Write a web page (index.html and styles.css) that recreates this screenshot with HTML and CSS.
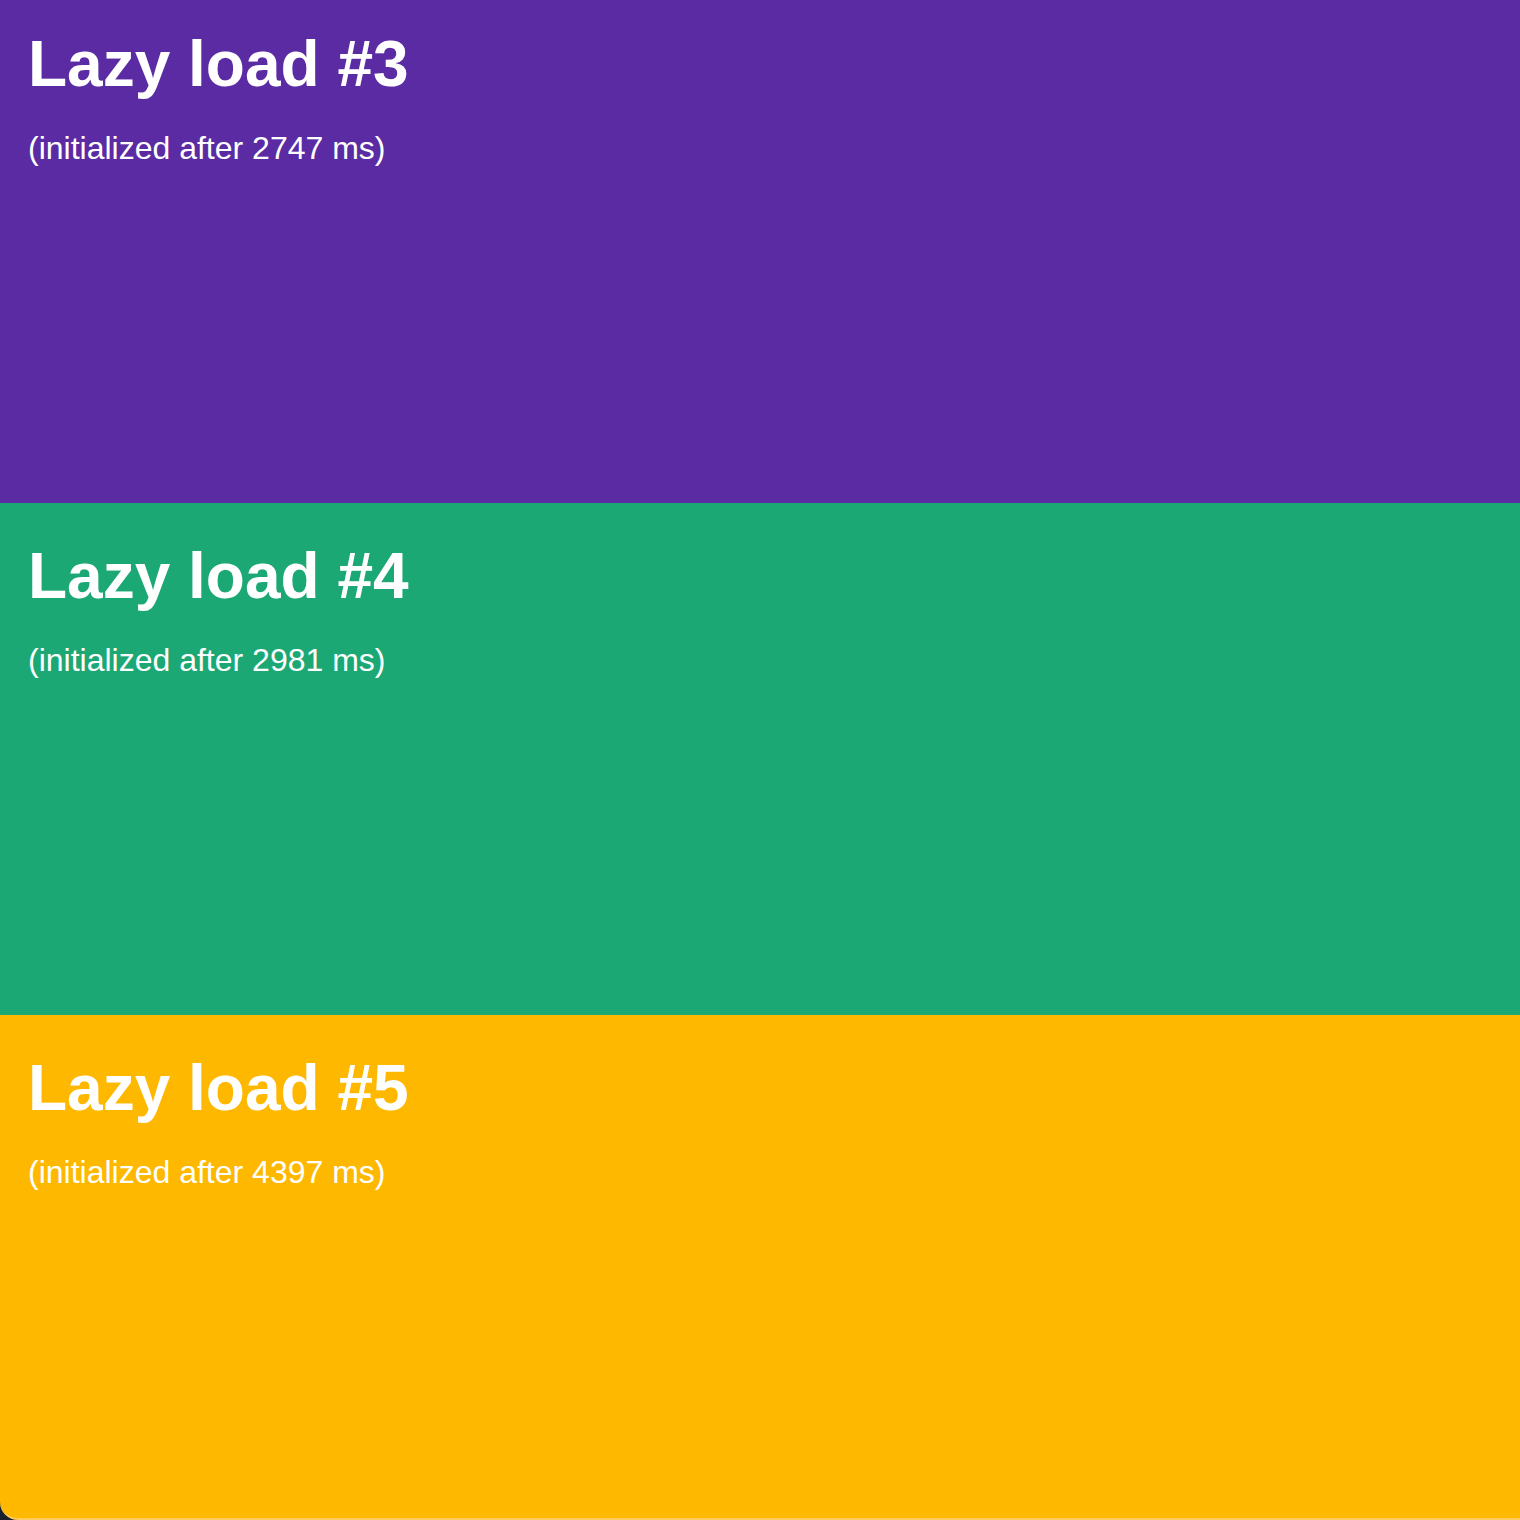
FILE: index.html
```html
<!DOCTYPE html>
<html>
<head>
<meta charset="utf-8">
<link rel="stylesheet" href="styles.css">
</head>
<body>
<main class="page">
  <section class="block purple">
    <h1 class="title">Lazy load #3</h1>
    <p class="note">(initialized after 2747 ms)</p>
  </section>
  <section class="block green">
    <h1 class="title">Lazy load #4</h1>
    <p class="note">(initialized after 2981 ms)</p>
  </section>
  <section class="block yellow last">
    <h1 class="title">Lazy load #5</h1>
    <p class="note">(initialized after 4397 ms)</p>
  </section>
</main>
</body>
</html>
```

FILE: styles.css
```css
html, body {
  margin: 0;
  padding: 0;
  background: #17202c;
  overflow: hidden;
}
body {
  font-family: "Liberation Sans", Arial, Helvetica, sans-serif;
  color: #ffffff;
}
.page {
  display: flex;
  flex-direction: column;
  margin-top: -9px;
}
.block {
  box-sizing: border-box;
  height: 512px;
  padding: 37px 28px 0;
}
.title {
  margin: 0;
  font-size: 64px;
  line-height: 72px;
  font-weight: 700;
}
.note {
  margin: 30px 0 0;
  font-size: 32px;
  line-height: 36px;
}
.purple { background: #5b2ba4; }
.green { background: #1ba874; }
.yellow { background: #ffb800; }
.last {
  height: 505px;
  border-bottom: 2px solid #ffcb5e;
  border-bottom-left-radius: 18px;
}
```
